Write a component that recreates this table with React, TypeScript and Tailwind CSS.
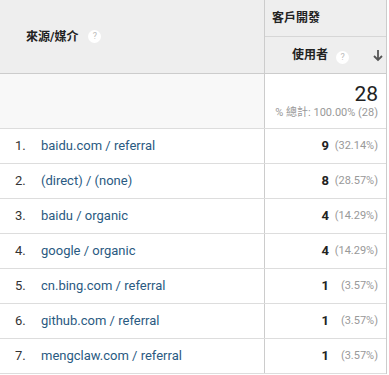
import type { JSX } from 'react';

const rows = [
  { source: 'baidu.com / referral', users: 9, pct: '(32.14%)' },
  { source: '(direct) / (none)', users: 8, pct: '(28.57%)' },
  { source: 'baidu / organic', users: 4, pct: '(14.29%)' },
  { source: 'google / organic', users: 4, pct: '(14.29%)' },
  { source: 'cn.bing.com / referral', users: 1, pct: '(3.57%)' },
  { source: 'github.com / referral', users: 1, pct: '(3.57%)' },
  { source: 'mengclaw.com / referral', users: 1, pct: '(3.57%)' },
];

function Help(): JSX.Element {
  return (
    <span className="inline-flex h-[13px] w-[13px] items-center justify-center rounded-full bg-white text-[9px] font-normal leading-none text-[#bbbbbb]">
      ?
    </span>
  );
}

export default function App(): JSX.Element {
  return (
    <div
      className="h-[375px] w-[389px] overflow-hidden bg-white text-[#333333]"
      style={{ fontFamily: 'Roboto, "Noto Sans CJK TC", Arial, sans-serif' }}
    >
      <div className="w-[387px] border-r border-[#cccccc]">
        {/* Header */}
        <div className="flex h-[74px] border-b border-[#cccccc] bg-[#eeeeee]">
          <div className="flex w-[265px] items-center gap-[10px] border-r border-[#cccccc] pl-[26px]">
            <span className="text-[12px] font-bold text-[#222222]">來源/媒介</span>
            <Help />
          </div>
          <div className="flex flex-1 flex-col">
            <div className="flex h-[37px] items-center border-b border-[#d6d6d6] pl-[7px] text-[12px] font-bold text-[#222222]">
              客戶開發
            </div>
            <div className="flex flex-1 items-center pl-[27px] pr-[2px]">
              <span className="text-[12px] font-bold text-[#222222]">使用者</span>
              <span className="ml-[8px]">
                <Help />
              </span>
              <svg className="ml-auto" width="12" height="13" viewBox="0 0 12 13">
                <path d="M6 1v10M2 7l4 4 4-4" stroke="#555555" strokeWidth="1.8" fill="none" />
              </svg>
            </div>
          </div>
        </div>

        {/* Total */}
        <div className="flex h-[55px] border-b border-[#dddddd]">
          <div className="w-[265px] border-r border-[#cccccc] bg-[#f8f8f8]" />
          <div className="flex flex-1 flex-col items-end justify-center pr-[8px]">
            <span className="text-[21px] leading-[24px] text-[#222222]">28</span>
            <span className="text-[11px] leading-[14px] text-[#999999]">% 總計: 100.00% (28)</span>
          </div>
        </div>

        {/* Rows */}
        {rows.map((r, i) => (
          <div key={r.source} className="flex h-[35px] border-b border-[#dddddd]">
            <div className="flex w-[265px] items-center border-r border-[#cccccc] text-[13px]">
              <span className="w-[41px] pl-[15px] text-[#333333]">{i + 1}.</span>
              <span className="text-[#2a5a82]">{r.source}</span>
            </div>
            <div className="flex flex-1 items-center justify-end pr-[8px]">
              <span className="text-[13px] font-bold text-[#222222]">{r.users}</span>
              <span className="w-[49px] text-right text-[11px] text-[#999999]">{r.pct}</span>
            </div>
          </div>
        ))}
      </div>
    </div>
  );
}
